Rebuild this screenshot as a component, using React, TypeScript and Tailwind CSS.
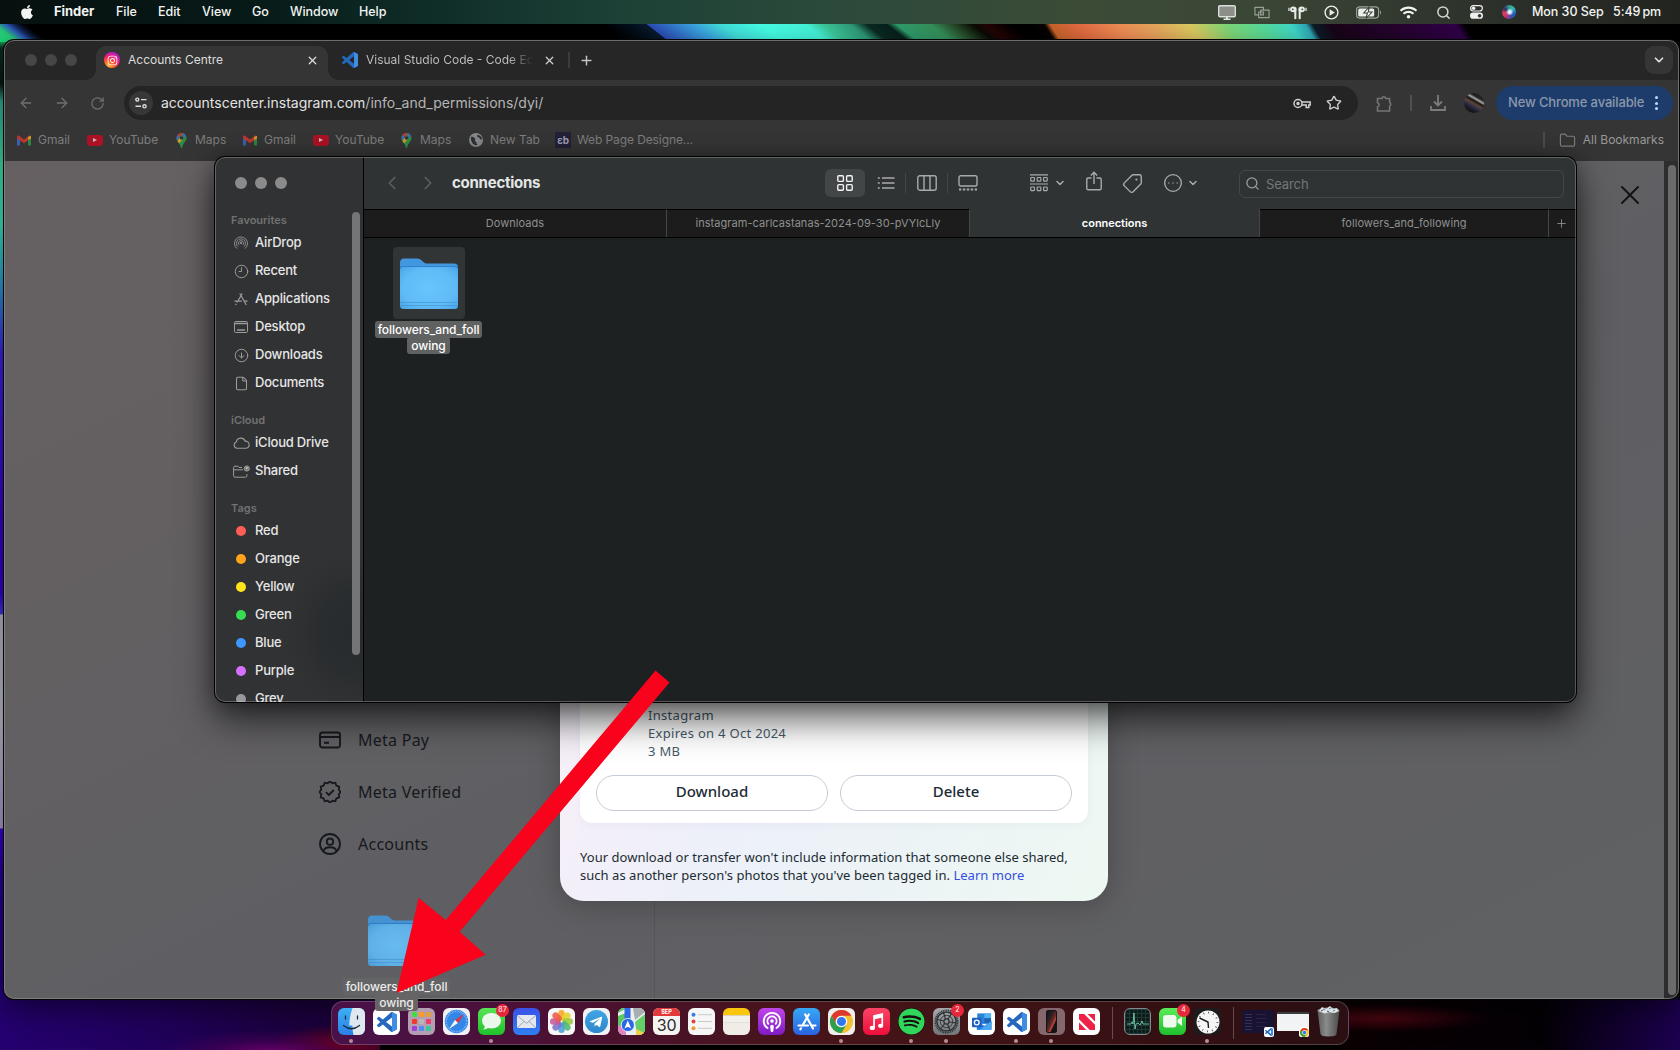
import React from "react";
import {
  ArrowLeft, ArrowRight, ChevronDown, ChevronLeft, ChevronRight, Plus, RotateCw, Star, X,
  Search, Share, Tag, CircleEllipsis, Folder as FolderIcon, Clock9, CircleArrowDown, File, Podcast,
} from "lucide-react";
import { FaApple, FaInstagram, FaSpotify, FaTelegramPlane, FaWifi } from "react-icons/fa";

const VSCODE =
  "M23.15 2.587L18.21.21a1.494 1.494 0 0 0-1.705.29l-9.46 8.63-4.12-3.128a.999.999 0 0 0-1.276.057L.327 7.261A1 1 0 0 0 .326 8.74L3.899 12 .326 15.26a1 1 0 0 0 .001 1.479L1.65 17.94a.999.999 0 0 0 1.276.057l4.12-3.128 9.46 8.63a1.492 1.492 0 0 0 1.704.29l4.942-2.377A1.5 1.5 0 0 0 24 20.06V3.939a1.5 1.5 0 0 0-.85-1.352zm-5.146 14.861L10.826 12l7.178-5.448v10.896z";

function VsCode({ className }: { className: string }) {
  return (
    <svg viewBox="0 0 24 24" className={className}>
      <path d={VSCODE} fill="#2668bd" />
      <path d="M18 .1 23.2 2.6 24 4v16l-.8 1.4L18 24z" fill="#3f8ee4" />
    </svg>
  );
}

/* ---------- Wallpaper ---------- */

function Wallpaper() {
  return (
    <div className="absolute inset-0 overflow-hidden bg-black">
      <div className="absolute left-0 top-[24px] h-[1026px] w-[6px] bg-[linear-gradient(to_bottom,#2a50c8_0px,#26e06a_14px,#0a2a20_24px,#041a18_60px,#2fae90_78px,#3fd8a8_140px,#3ce0b8_200px,#2a9ad0_260px,#3a20e0_330px,#3400c8_500px,#3200d0_570px,#4038e0_590px,#b4b5c6_591px,#bcbaca_700px,#a898cc_804px,#3700d8_805px,#24009a_850px,#1e0070_1026px)]" />
      <svg className="absolute left-0 top-[24px] h-[18px] w-[60px]" viewBox="0 0 60 18">
        <defs>
          <linearGradient id="cornerGlow" x1="0" y1="18" x2="18" y2="-6" gradientUnits="userSpaceOnUse">
            <stop offset="0" stopColor="#1ad878" />
            <stop offset=".35" stopColor="#28c878" />
            <stop offset=".6" stopColor="#2a56b8" />
            <stop offset="1" stopColor="#0a1230" stopOpacity="0" />
          </linearGradient>
        </defs>
        <path d="M0 0H40L60 18H0Z" fill="url(#cornerGlow)" />
      </svg>
      <div className="absolute left-[600px] top-[24px] h-[17px] w-[430px] origin-top skew-x-[52deg] bg-[linear-gradient(to_right,#000_0px,#03101c_30px,#0a1a30_46px,#2b4bb4_47px,#3aa0e0_90px,#41e0dc_120px,#45ffe6_160px,#45f5da_205px,#3cc89a_222px,#2f9a78_250px,#0a2a22_266px,#07201c_286px,#2f9c6c_296px,#35905a_330px,#28502c_350px,#0a0a04_372px,#240404_385px,#000_410px)]" />
      <div className="absolute left-[1030px] top-[24px] h-[17px] w-[500px] origin-top skew-x-[32deg] bg-[linear-gradient(to_right,#000_0px,#0a0402_14px,#c8642a_20px,#e06a40_45px,#f08a54_85px,#e8a45c_120px,#dccb60_160px,#80d878_195px,#58dc98_230px,#40d8c8_260px,#2fa8b8_275px,#0c1c28_282px,#180418_300px,#24042c_360px,#300048_425px,#000_434px,#000_500px)]" />
      <div className="absolute bottom-0 left-0 h-[52px] w-[480px] bg-[radial-gradient(ellipse_110px_22px_at_270px_54px,#6a0068_0%,#50005880_50%,transparent_100%),radial-gradient(ellipse_70px_20px_at_345px_46px,#700010_0%,transparent_100%),linear-gradient(to_right,#240070_0%,#20005a_35%,#1c0040_60%,#160030_100%)]" />
      <div className="absolute bottom-0 left-[380px] h-[52px] w-[960px] bg-black" />
      <div className="absolute bottom-0 left-[1340px] h-[52px] w-[340px] bg-[radial-gradient(ellipse_110px_14px_at_40px_20px,#4a0610_0%,transparent_100%),linear-gradient(to_right,#0a0002_0%,#040006_60%,#1c0050_100%)]" />
      <div className="absolute right-0 top-[40px] h-[960px] w-[2px] bg-[#050505]" />
    </div>
  );
}

/* ---------- Menu bar ---------- */

function MenuBar() {
  return (
    <div className="absolute inset-x-0 top-0 flex h-6 items-center whitespace-nowrap bg-[linear-gradient(to_right,#06100f_0px,#071a18_250px,#0f2d28_430px,#1d4136_620px,#2b4a3b_830px,#3b4b36_1080px,#3b4736_1250px,#2c302a_1500px,#22241f_1680px)] text-[12.5px] font-medium tracking-[-0.05px] text-[#f2f4f3]">
      <FaApple className="ml-[19px] h-[16px] w-[16px]" />
      <span className="ml-[19px] w-[62px] text-[13px] font-bold">Finder</span>
      <span className="w-[42px]">File</span>
      <span className="w-[44px]">Edit</span>
      <span className="w-[50px]">View</span>
      <span className="w-[38px]">Go</span>
      <span className="w-[69px]">Window</span>
      <span>Help</span>
      <div className="ml-auto flex items-center">
        <svg viewBox="0 0 18 15" className="mr-[18px] h-[15px] w-[18px]">
          <rect x=".7" y=".7" width="16.6" height="11" rx="1.2" fill="#8b8f88" stroke="#dcdedb" strokeWidth="1.4" />
          <path d="M5.5 14.3h7M9 12v2" stroke="#e6e8e5" strokeWidth="1.8" />
        </svg>
        <svg viewBox="0 0 17 13" className="mr-[18px] h-[13px] w-[16px] opacity-60" fill="none" stroke="#d8dad6" strokeWidth="1.2">
          <path d="M10 4V1H1v8h4M7 4h9v8H5V9M5 9V6h5v3H7V4" />
        </svg>
        <svg viewBox="0 0 20 15" className="mr-[17px] h-[15px] w-[19px]" fill="#e8eae7">
          <ellipse cx="5.6" cy="4.2" rx="3.4" ry="3" /><ellipse cx="14.4" cy="4.2" rx="3.4" ry="3" />
          <rect x="6.6" y="4" width="2.2" height="10.5" rx="1" /><rect x="11.2" y="4" width="2.2" height="10.5" rx="1" />
          <path d="M1 2.600v3.400M19 2.600v3.400" stroke="#e8eae7" strokeWidth="1.300" />
          <circle cx="5" cy="4.2" r=".9" fill="#3a4636" /><circle cx="15" cy="4.2" r=".9" fill="#3a4636" />
        </svg>
        <svg viewBox="0 0 15 15" className="mr-[17px] h-[15px] w-[15px]">
          <circle cx="7.5" cy="7.5" r="6.4" fill="none" stroke="#eceeeb" strokeWidth="1.4" />
          <path d="M5.6 4.3v6.4l5.200-3.200z" fill="#eceeeb" />
        </svg>
        <svg viewBox="0 0 26 13" className="mr-[18px] h-[13px] w-[26px]">
          <rect x=".6" y=".9" width="22" height="11.2" rx="3" fill="none" stroke="#9da19a" strokeWidth="1.1" />
          <rect x="2.2" y="2.5" width="16" height="8" rx="1.6" fill="#eceeeb" />
          <path d="M13.5.5 7.8 7h3.6L10 12.5 16 6h-3.8z" fill="#fff" stroke="#3a4434" strokeWidth="1.1" />
          <path d="M24 4.6c1.4.6 1.4 3.2 0 3.8z" fill="#9da19a" />
        </svg>
        <FaWifi className="mr-[19px] h-[17px] w-[17px]" />
        <Search className="mr-[19px] h-[15px] w-[15px] text-[#d2d4d0]" strokeWidth={2.4} />
        <svg viewBox="0 0 13 14" className="mr-[19px] h-[14px] w-[13px]">
          <rect x=".6" y=".6" width="11.8" height="5.4" rx="2.7" fill="none" stroke="#eee" strokeWidth="1.2" />
          <circle cx="3.6" cy="3.3" r="1.8" fill="#eee" />
          <rect x="0" y="7.6" width="13" height="6.2" rx="3.1" fill="#eee" />
          <circle cx="9.6" cy="10.7" r="1.8" fill="#30352d" />
        </svg>
        <div className="mr-[16px] h-[14px] w-[14px] rounded-full bg-[radial-gradient(circle_at_55%_50%,#fff_0%,#d8e8ff_14%,transparent_36%),conic-gradient(from_0deg,#3a9a8a,#2ac0b0,#2a60c0,#3050b0,#c03070,#e04060,#303060,#3a9a8a)]" />
        <span className="w-[81px]">Mon 30 Sep</span>
        <span className="w-[67px]">5:49<span className="ml-[2px]">pm</span></span>
      </div>
    </div>
  );
}

/* ---------- Browser ---------- */

const Gmail = () => (
  <svg viewBox="0 0 14 11" className="h-[11px] w-[14px]">
    <path d="M0 1.5V10.4h3V4.5z" fill="#3c5fb0" /><path d="M14 1.5v8.9h-3V4.5z" fill="#2b8540" />
    <path d="M0 1.2 1.4.2 7 4.6 12.6.2 14 1.2v2L7 8.3 0 3.2z" fill="#b8372e" /><path d="M11 2 14 .8v3L11 5z" fill="#c99a22" />
  </svg>
);
const Youtube = () => <span className="relative h-[11px] w-[16px] rounded-[3px] bg-[#ab1225]"><span className="absolute left-[6px] top-[3px] border-y-[2.5px] border-l-[4px] border-y-transparent border-l-[#c9b9bb]" /></span>;
const Maps = () => (
  <svg viewBox="0 0 10 15" className="h-[15px] w-[11px]">
    <path d="M5 0a5 5 0 0 0-5 5c0 3.5 3.6 5 4.3 9.4q.7 1.2 1.4 0C6.400 10 10 8.500 10 5a5 5 0 0 0-5-5z" fill="#2f8a48" />
    <path d="M.9 2.200A5 5 0 0 1 6.500.2L2.800 5z" fill="#b83a34" /><path d="M6.400.2A5 5 0 0 1 9.300 2.500L5.500 6.800z" fill="#3c68b8" />
    <path d="M.8 7.800 4 3.800l2.500 2.200L2.600 10.500z" fill="#c69c28" /><path d="M0 5a5 5 0 0 1 1-2.900L3 3.800.8 7.800A5 5 0 0 1 0 5z" fill="#3c68b8" />
    <circle cx="5" cy="5" r="1.800" fill="#343434" />
  </svg>
);

function Bookmark({ icon, label, className }: { icon: React.ReactNode; label: string; className: string }) {
  return <div className={"flex items-center text-[12px] " + className}>{icon}<span>{label}</span></div>;
}

function Browser() {
  return (
    <div className="absolute left-[4px] top-[40px] flex h-[959px] w-[1675px] flex-col overflow-hidden rounded-[10px] bg-[#353535] shadow-[0_0_0_1px_#050505,0_10px_30px_rgba(0,0,0,.5)]">
      <div className="flex h-10 shrink-0 items-center bg-[#262626]">
        <div className="ml-[21px] flex gap-2">
          <i className="h-3 w-3 rounded-full bg-[#464646]" /><i className="h-3 w-3 rounded-full bg-[#464646]" /><i className="h-3 w-3 rounded-full bg-[#464646]" />
        </div>
        <div className="relative ml-[19px] mt-[6px] flex h-[34px] w-[232px] items-center self-start rounded-t-[10px] bg-[#353535] pb-[6px] text-[12px] text-[#dcdcdc]">
          <i className="absolute -left-[10px] bottom-0 h-[10px] w-[10px] bg-[radial-gradient(circle_at_0_0,#262626_9.5px,#353535_10px)]" />
          <i className="absolute -right-[10px] bottom-0 h-[10px] w-[10px] bg-[radial-gradient(circle_at_100%_0,#262626_9.5px,#353535_10px)]" />
          <span className="ml-2 flex h-4 w-4 items-center justify-center rounded-full bg-[radial-gradient(circle_at_25%_95%,#ffc840_0%,#ff6a20_28%,#f0206a_55%,#b018d8_85%)] text-white"><FaInstagram className="h-[11px] w-[11px]" /></span>
          <span className="ml-2">Accounts Centre</span>
          <X className="ml-auto mr-[9px] h-[13px] w-[13px]" strokeWidth={2.4} />
        </div>
        <VsCode className="ml-[14px] h-4 w-4" />
        <span className="ml-2 w-[167px] overflow-hidden whitespace-nowrap bg-[linear-gradient(to_right,#c2c2c2_85%,#26262600_100%)] bg-clip-text text-[12px] text-transparent">Visual Studio Code - Code Editing</span>
        <X className="ml-[10px] h-[13px] w-[13px] text-[#d0d0d0]" strokeWidth={2.3} />
        <i className="ml-[12px] h-4 w-[2px] bg-[#3c3c3c]" />
        <Plus className="ml-[9px] h-[15px] w-[15px] text-[#c4c4c4]" strokeWidth={2.3} />
        <div className="ml-auto mr-[6px] flex h-7 w-7 items-center justify-center rounded-[9px] bg-[#353535] text-[#e0e0e0]"><ChevronDown className="h-[14px] w-[14px]" strokeWidth={3} /></div>
      </div>

      <div className="flex h-[46px] shrink-0 items-center text-[#6f6f6f]">
        <ArrowLeft className="ml-[14px] h-4 w-4" /><ArrowRight className="ml-5 h-4 w-4" /><RotateCw className="ml-5 h-[15px] w-[15px]" />
        <div className="ml-[19px] flex h-[34px] w-[1234px] items-center rounded-full bg-[#242424]">
          <span className="ml-[5px] flex h-6 w-6 items-center justify-center rounded-full bg-[#373737]">
            <svg viewBox="0 0 12 12" className="h-3 w-3" fill="none" stroke="#dcdcdc" strokeWidth="1.4"><circle cx="2.300" cy="2.600" r="1.500" /><path d="M6 2.600h5.500M.5 9.300H6" /><circle cx="9.500" cy="9.300" r="1.600" /></svg>
          </span>
          <span className="mb-[2px] ml-2 text-[14px] text-[#b5b5b5]"><span className="text-[#e2e2e2]">accountscenter.instagram.com</span>/info_and_permissions/dyi/</span>
          <svg viewBox="0 0 18 11" className="ml-auto mr-[15px] h-[11px] w-[18px]" fill="none" stroke="#cfcfcf" strokeWidth="1.500"><circle cx="5" cy="5.500" r="4" /><circle cx="5" cy="5.500" r="1" fill="#cfcfcf" /><path d="M9 4h8.200v3h-1.400v2.500h-2.600V7H9" /></svg>
          <Star className="mr-4 h-4 w-4 text-[#d0d0d0]" strokeWidth={2} />
        </div>
        <svg viewBox="0 0 16 17" className="ml-[18px] h-[17px] w-4" fill="none" stroke="#747474" strokeWidth="1.600"><path d="M1.500 3.500h4.500a1.800 1.800 0 0 1 3.600 0h4v4a2 2 0 0 1 0 3.600V16H1.500v-4.200a2.100 2.100 0 0 0 0-4.100z" /></svg>
        <i className="ml-[18px] h-4 w-[2px] bg-[#505050]" />
        <svg viewBox="0 0 16 16" className="ml-[18px] h-4 w-4" fill="none" stroke="#7c7c7c" strokeWidth="1.800"><path d="M8 0v10M4 6.500l4 4 4-4M1 11v4h14v-4" /></svg>
        <span className="ml-[18px] h-5 w-5 rounded-full bg-[linear-gradient(30deg,#151515_20%,#2a2a48_35%,#5a4638_48%,#141414_58%,#a8a8a8_66%,#222_74%)]" />
        <div className="ml-[12px] flex h-[34px] w-[177px] items-center whitespace-nowrap rounded-full bg-[#1d3c6c] pl-3 text-[13px] font-medium text-[#8b98ab]">
          <span className="w-[143px] tracking-[-0.14px]">New Chrome available</span>
          <span className="ml-1 flex flex-col gap-[2.500px]"><i className="h-[3px] w-[3px] rounded-full bg-[#bcd6ff]" /><i className="h-[3px] w-[3px] rounded-full bg-[#bcd6ff]" /><i className="h-[3px] w-[3px] rounded-full bg-[#bcd6ff]" /></span>
        </div>
      </div>

      <div className="flex h-[35px] shrink-0 items-center whitespace-nowrap pb-[7px] text-[#7d7d7d]">
        <Bookmark icon={<Gmail />} label="Gmail" className="ml-[13px] w-[70px] gap-[7px]" />
        <Bookmark icon={<Youtube />} label="YouTube" className="w-[89px] gap-[6px]" />
        <Bookmark icon={<Maps />} label="Maps" className="w-[67px] gap-[8px]" />
        <Bookmark icon={<Gmail />} label="Gmail" className="w-[70px] gap-[7px]" />
        <Bookmark icon={<Youtube />} label="YouTube" className="w-[88px] gap-[6px]" />
        <Bookmark icon={<Maps />} label="Maps" className="w-[68px] gap-[8px]" />
        <Bookmark icon={<svg viewBox="0 0 14 14" className="h-[14px] w-[14px]"><circle cx="7" cy="7" r="7" fill="#85888c" /><path d="M2 4c2-.5 3 .5 4 1.500S5 8 6.500 8.500 7 11 8.500 12c-4 1-7-3-6.500-8zM8 2c-.5 2 1 2 2 2.500s.5 2.500 3 2c0-3-2-4.500-5-4.500z" fill="#303030" /></svg>} label="New Tab" className="w-[86px] gap-[7px]" />
        <Bookmark icon={<span className="flex h-4 w-4 items-center justify-center bg-[#232037] text-[10px] font-bold text-[#9c9bb0]">ɛb</span>} label="Web Page Designe..." className="gap-[6px] tracking-[-0.1px]" />
        <i className="ml-auto h-4 w-[2px] bg-[#4c4c4c]" />
        <FolderIcon className="ml-[14px] h-[17px] w-[17px]" strokeWidth={1.700} />
        <span className="ml-[7px] mr-[15px] text-[12px] text-[#989898]">All Bookmarks</span>
      </div>
      <Page />
      <div className="pointer-events-none absolute inset-0 rounded-[10px] border border-[#8a8d8a]/70" />
    </div>
  );
}

function NavItem({ icon, label }: { icon: React.ReactNode; label: string }) {
  return <div className="flex h-[52px] items-center gap-[17px] text-[16px] tracking-[0.25px] text-[#16191d]">{icon}<span className="mb-px">{label}</span></div>;
}

function Page() {
  const seal = Array.from({ length: 24 }, (_, i) => {
    const a = (i * Math.PI) / 12;
    const r = i % 2 ? 9 : 10.700;
    return `${11 + r * Math.cos(a)},${11 + r * Math.sin(a)}`;
  }).join(" ");
  return (
    <div className="flex flex-1 bg-[linear-gradient(to_bottom_right,#666062_0%,#646062_25%,#5f5f63_55%,#606163_100%)] font-['Noto_Sans',sans-serif]">
      <div className="flex w-[651px] shrink-0 flex-col border-r border-[#56565a] pl-[315px] pt-[553px]">
        <NavItem label="Meta Pay" icon={<svg viewBox="0 0 22 22" className="h-[22px] w-[22px]" fill="none" stroke="#16191d" strokeWidth="1.900"><rect x="1" y="3.500" width="20" height="15" rx="2.500" /><path d="M1 8h20M5 13.800h5" /></svg>} />
        <NavItem label="Meta Verified" icon={<svg viewBox="0 0 22 22" className="h-[22px] w-[22px]" fill="none" stroke="#16191d" strokeWidth="1.800" strokeLinejoin="round"><polygon points={seal} /><path d="m7 11.200 2.800 2.800 5-5" /></svg>} />
        <NavItem label="Accounts" icon={<svg viewBox="0 0 22 22" className="h-[22px] w-[22px]" fill="none" stroke="#16191d" strokeWidth="1.800"><circle cx="11" cy="11" r="10" /><circle cx="11" cy="8.700" r="3.200" /><path d="M4.500 18c1.500-5 11.500-5 13 0" /></svg>} />
      </div>
      <div className="flex flex-1 justify-end pr-[18px] pt-[18px]"><X className="h-8 w-8 text-[#101214]" strokeWidth={1.500} /></div>
      <div className="flex w-[15px] justify-center bg-[#2d2d2d] pt-1"><i className="h-[830px] w-2 rounded-full bg-[#6b6b6b]" /></div>
      <div className="absolute left-[556px] top-[300px] flex h-[561px] w-[548px] flex-col rounded-[24px] bg-[linear-gradient(115deg,#f6eff6_0%,#f4eff8_30%,#edf0f9_48%,#ecf3f6_70%,#eef8f2_100%)] px-5 pb-[15px] text-[13px] text-[#1c2b33] shadow-[0_4px_30px_rgba(0,0,0,.25)]">
        <div className="flex h-[483px] flex-col justify-end rounded-b-[12px] bg-white px-4 pb-3 shadow-[0_2px_8px_rgba(80,80,140,.05)]">
          <div className="mb-[15px] pl-[52px] leading-[18px] tracking-[0.3px] text-[#465a69]"><p>Instagram</p><p>Expires on 4 Oct 2024</p><p>3 MB</p></div>
          <div className="flex gap-3 text-[15px] font-medium">
            <div className="flex h-9 flex-1 items-center justify-center rounded-full border border-[#c6ccd6] pb-1">Download</div>
            <div className="flex h-9 flex-1 items-center justify-center rounded-full border border-[#c6ccd6] pb-1">Delete</div>
          </div>
        </div>
        <p className="mt-[25px] whitespace-nowrap leading-[18px] tracking-[0.03px]">Your download or transfer won't include information that someone else shared,<br />such as another person's photos that you've been tagged in. <span className="text-[#3450e0]">Learn more</span></p>
      </div>
    </div>
  );
}

/* ---------- Finder ---------- */

function FolderArt({ id }: { id: string }) {
  return (
    <svg viewBox="0 0 58 52" className="h-[52px] w-[58px]">
      <defs>
        <radialGradient id={id} cx=".5" cy=".5" r=".75"><stop offset="0" stopColor="#69c5fd" /><stop offset=".6" stopColor="#60bbf6" /><stop offset="1" stopColor="#46a0e2" /></radialGradient>
      </defs>
      <path d="M0 5q0-4.500 4-4.500h13q3 0 5 2.300 2 2.700 5 2.700h27q4 0 4 4v8H0z" fill="#4298de" />
      <path d="M0 10q0-2 2-2h54q2 0 2 2v5H0z" fill="#2f7fd2" />
      <rect y="9" width="58" height="42" rx="3.500" fill={"url(#" + id + ")"} />
      <path d="M0 44.500h58M0 47.500h58" stroke="#3888c8" strokeWidth=".7" opacity=".7" />
    </svg>
  );
}

const icon = "h-[15px] w-[15px] text-[#9a9b9c]";
const AirDrop = () => (
  <svg viewBox="0 0 14 14" className="h-[14px] w-[14px]" fill="none" stroke="#9a9b9c" strokeWidth=".85">
    <path d="M3.100 12.600a6.500 6.500 0 1 1 7.800 0M4 10.700a4.500 4.500 0 1 1 6 0M5.200 8.900a2.500 2.500 0 1 1 3.600 0" /><circle cx="7" cy="7" r=".7" fill="#9a9b9c" />
  </svg>
);
const Apps = () => <svg viewBox="0 0 14 14" className="h-[14px] w-[14px]" fill="none" stroke="#9a9b9c" strokeWidth="1.200"><path d="M8.200 1.500 3 10.500M1.500 13l.8-1.300M5.800 1.500l6.500 11.500M.5 9.200h7.300M10.300 9.200h3.200" /></svg>;
const Desk = () => <svg viewBox="0 0 14 12" className="h-[12px] w-[14px]" fill="none" stroke="#9a9b9c"><rect x=".5" y=".5" width="13" height="11" rx="1.200" /><path d="M1 2.500h12M3 9h8" strokeWidth="1.400" /></svg>;
const CloudGlyph = () => <svg viewBox="0 0 17 12" className="h-[12px] w-[17px]" fill="none" stroke="#9a9b9c" strokeWidth="1.100"><path d="M4 11.200a3.200 3.200 0 0 1-.7-6.200 4.600 4.600 0 0 1 8.900-.8 3.500 3.500 0 0 1 .8 7z" /></svg>;
const Shared = () => <svg viewBox="0 0 17 13" className="h-[13px] w-[17px]" fill="none" stroke="#9a9b9c"><path d="M9 2.500H6L5 1.200H2Q.6 1.200.6 2.600v8.200q0 1.400 1.400 1.400h10.500q1.400 0 1.400-1.400V9M.6 4.800H10" /><circle cx="13.800" cy="3.500" r="2.600" fill="#77797a" /><circle cx="13.800" cy="3" r=".9" fill="#ccc" stroke="none" /></svg>;

function Row({ glyph, label }: { glyph: React.ReactNode; label: string }) {
  return (
    <div className="flex h-7 shrink-0 items-center text-[13px] font-medium tracking-[-0.2px] text-[#e6e6e7]">
      <span className="ml-4 mr-1 flex w-[20px] justify-center">{glyph}</span>{label}
    </div>
  );
}
const Heading = ({ children, className }: { children: string; className: string }) => <div className={"h-[17px] shrink-0 pl-4 text-[11px] font-semibold leading-[16px] text-[#707172] " + className}>{children}</div>;
const TagDot = ({ c }: { c: string }) => <i className="h-[10px] w-[10px] rounded-full" style={{ background: c }} />;

function Finder() {
  const tags: [string, string][] = [["Red", "#ff5e57"], ["Orange", "#ffa41c"], ["Yellow", "#ffe31c"], ["Green", "#37dd52"], ["Blue", "#3e97ff"], ["Purple", "#d76fff"], ["Grey", "#98989d"]];
  return (
    <div className="absolute left-[215px] top-[157px] flex h-[545px] w-[1361px] overflow-hidden rounded-[10px] bg-[#1e2121]">
      <aside className="relative flex w-[148px] shrink-0 flex-col overflow-hidden bg-[#313233] bg-[radial-gradient(ellipse_70px_80px_at_140px_475px,#262b2e_0%,#2a2d2f_50%,transparent_100%)]">
        <div className="ml-5 mt-5 flex shrink-0 gap-2"><i className="h-3 w-3 rounded-full bg-[#8b8b8c]" /><i className="h-3 w-3 rounded-full bg-[#8b8b8c]" /><i className="h-3 w-3 rounded-full bg-[#8b8b8c]" /></div>
        <Heading className="mt-[23px]">Favourites</Heading>
        <Row glyph={<AirDrop />} label="AirDrop" />
        <Row glyph={<Clock9 className={icon} strokeWidth={1.600} />} label="Recent" />
        <Row glyph={<Apps />} label="Applications" />
        <Row glyph={<Desk />} label="Desktop" />
        <Row glyph={<CircleArrowDown className={icon} strokeWidth={1.600} />} label="Downloads" />
        <Row glyph={<File className={icon} strokeWidth={1.700} />} label="Documents" />
        <Heading className="mt-[15px]">iCloud</Heading>
        <Row glyph={<CloudGlyph />} label="iCloud Drive" />
        <Row glyph={<Shared />} label="Shared" />
        <Heading className="mt-[15px]">Tags</Heading>
        {tags.map(([n, c]) => <Row key={n} glyph={<TagDot c={c} />} label={n} />)}
        <i className="absolute left-[137px] top-[55px] h-[443px] w-2 rounded-full bg-[#737576]" />
      </aside>
      <section className="flex flex-1 flex-col border-l border-black">
        <header className="flex h-[52px] items-center bg-[#2f3334] text-[#a9abab]">
          <ChevronLeft className="ml-[17px] h-[22px] w-[22px] text-[#5c5f60]" strokeWidth={1.800} />
          <ChevronRight className="ml-[14px] h-[22px] w-[22px] text-[#5c5f60]" strokeWidth={1.800} />
          <span className="ml-[13px] w-[373px] text-[15px] font-bold tracking-[-0.25px] text-[#e4e5e5]">connections</span>
          <span className="flex h-7 w-10 items-center justify-center rounded-[6px] bg-[#434647]"><svg viewBox="0 0 16 16" className="h-4 w-4" fill="none" stroke="#f4f4f4" strokeWidth="1.400"><rect x=".8" y=".8" width="5.600" height="5.600" rx="1" /><rect x="9.600" y=".8" width="5.600" height="5.600" rx="1" /><rect x=".8" y="9.600" width="5.600" height="5.600" rx="1" /><rect x="9.600" y="9.600" width="5.600" height="5.600" rx="1" /></svg></span>
          <svg viewBox="0 0 18 14" className="ml-[12px] h-[14px] w-[18px]" stroke="currentColor" strokeWidth="1.400"><path d="M5 2h12.500M5 7h12.500M5 12h12.500M.8 2h2M.8 7h2M.8 12h2" /></svg>
          <i className="ml-[10px] h-5 w-px bg-[#434747]" />
          <svg viewBox="0 0 20 16" className="ml-[11px] h-4 w-5" fill="none" stroke="currentColor" strokeWidth="1.400"><rect x=".8" y=".8" width="18.400" height="14.400" rx="2" /><path d="M7 1v14M13 1v14" /></svg>
          <i className="ml-[10px] h-5 w-px bg-[#434747]" />
          <svg viewBox="0 0 20 16" className="ml-[10px] h-4 w-5" fill="none" stroke="currentColor" strokeWidth="1.400"><rect x="1" y=".8" width="18" height="10.200" rx="1.800" /><path d="M1 14.500h18" strokeWidth="2" strokeDasharray="2.400 1.500" /></svg>
          <svg viewBox="0 0 18 18" className="ml-[52px] h-[18px] w-[18px]" fill="none" stroke="currentColor" strokeWidth="1.200"><path d="M0 .8h18M0 10h18" /><rect x=".8" y="3.500" width="3.600" height="3.600" rx=".6" /><rect x="7.200" y="3.500" width="3.600" height="3.600" rx=".6" /><rect x="13.600" y="3.500" width="3.600" height="3.600" rx=".6" /><rect x=".8" y="13" width="3.600" height="3.600" rx=".6" /><rect x="7.200" y="13" width="3.600" height="3.600" rx=".6" /><rect x="13.600" y="13" width="3.600" height="3.600" rx=".6" /></svg>
          <ChevronDown className="ml-[6px] h-3 w-3" strokeWidth={3} />
          <svg viewBox="0 0 16 20" className="mb-1 ml-[20px] h-[20px] w-4" fill="none" stroke="currentColor" strokeWidth="1.400"><path d="M5.500 7H2.200Q.8 7 .8 8.400v9Q.8 18.800 2.200 18.800h11.600q1.400 0 1.400-1.400v-9Q15.200 7 13.800 7h-3.300M8 13V1.500M4.800 4.500 8 1.300l3.200 3.200" /></svg>
          <Tag className="ml-[20px] h-[21px] w-[21px] rotate-90" strokeWidth={1.600} />
          <CircleEllipsis className="ml-[20px] h-[20px] w-[20px]" strokeWidth={1.600} />
          <ChevronDown className="ml-[4px] h-3 w-3" strokeWidth={3} />
          <div className="ml-auto mr-[12px] mt-px flex h-7 w-[325px] items-center rounded-[6px] border border-[#434748] pl-[5px] text-[13px] text-[#757879]"><Search className="mr-[6px] h-[15px] w-[15px] text-[#9da0a0]" /><span className="mt-[2px] tracking-[-0.1px]">Search</span></div>
        </header>
        <nav className="flex h-[29px] shrink-0 border-b border-black text-[11px] tracking-[0.06px] text-[#8f9090]">
          <div className="flex w-[303px] items-center justify-center border-r border-t border-r-[#444747] border-t-black bg-[#1b1c1b]">Downloads</div>
          <div className="flex w-[303px] items-center justify-center border-r border-t border-r-[#444747] border-t-black bg-[#1b1c1b]">instagram-carlcastanas-2024-09-30-pVYlcLly</div>
          <div className="flex w-[290px] items-center justify-center border-r border-r-[#444747] bg-[#2f3334] pt-px font-semibold tracking-[-0.04px] text-white">connections</div>
          <div className="flex w-[289px] items-center justify-center border-r border-t border-r-[#444747] border-t-black bg-[#1b1c1b]">followers_and_following</div>
          <div className="flex flex-1 items-center border-t border-black bg-[#1b1c1b] pl-[6px]"><Plus className="h-[13px] w-[13px]" strokeWidth={1.600} /></div>
        </nav>
        <div className="ml-[10px] mt-[9px] flex w-[109px] flex-col items-center whitespace-nowrap text-[12px] font-medium leading-[18px] tracking-[-0.05px] text-white">
          <span className="flex h-[72px] w-[72px] items-center justify-center rounded-[4px] bg-[#313536] pt-[2px]"><FolderArt id="folderMain" /></span>
          <span className="mt-[2px] h-[17px] rounded-[3px] bg-[#606161] px-[3px]">followers_and_foll</span>
          <span className="-mt-px h-[17px] rounded-[3px] bg-[#606161] px-1">owing</span>
        </div>
      </section>
      <div className="pointer-events-none absolute inset-0 rounded-[10px] border border-white/25" />
    </div>
  );
}

/* ---------- Dock ---------- */

function Tile({ children, className = "", dot, badge }: { children?: React.ReactNode; className?: string; dot?: boolean; badge?: string }) {
  return (
    <div className="relative h-[27px] w-[27px] shrink-0">
      <div className={"flex h-full w-full items-center justify-center overflow-hidden rounded-[6px] " + className}>{children}</div>
      {dot && <i className="absolute -bottom-[8px] left-[11px] h-1 w-1 rounded-full bg-[#b88d95]" />}
      {badge && <span className="absolute -right-[4px] -top-[4px] flex h-[13px] w-[13px] items-center justify-center rounded-full bg-[#e8273a] text-[7px] text-white">{badge}</span>}
    </div>
  );
}

const Chrome = ({ className }: { className: string }) => (
  <svg viewBox="0 0 24 24" className={className}>
    <circle cx="12" cy="12" r="12" fill="#f3c231" />
    <path d="M12 0a12 12 0 0 1 10.400 6H12a6 6 0 0 0-5.200 9L1.600 6A12 12 0 0 1 12 0z" fill="#dd3a2f" />
    <path d="M1.600 6l5.200 9A6 6 0 0 0 12 18h1.500L12 24A12 12 0 0 1 1.600 6z" fill="#2da04f" /><path d="M17.200 15 12 24 9 17z" fill="#2da04f" />
    <circle cx="12" cy="12" r="6" fill="#fff" /><circle cx="12" cy="12" r="4.700" fill="#3277f0" />
  </svg>
);

function Dock() {
  const petals = ["#f5a623", "#e8d22c", "#9ccb3c", "#52b86c", "#4a9fd8", "#7a74c8", "#c65a9c", "#ee5a44"];
  const pads = ["#3ee03e", "#ff9a1c", "#e8a030", "#f03a2a", "#b8b8b8", "#f03a6a", "#a040d8", "#4a90f0", "#38c8a0"];
  return (
    <div className="absolute left-[331px] top-[1001px] flex h-[44px] w-[1018px] items-start gap-2 rounded-[12px] border border-white/20 bg-[linear-gradient(to_right,#491149_0%,#4b1136_20%,#47141a_45%,#421416_60%,#351013_80%,#2a0f13_100%)] pl-[6px] pt-[6px]">
      <Tile dot className="bg-[linear-gradient(#3bb0f5,#2b7fe6)]"><svg viewBox="0 0 27 27" className="h-[27px] w-[27px]"><path d="M14.500 0H27v27H15.500q-1.200-5-1-9.500h-3.300Q11.500 8 14.500 0z" fill="#dfe7ef" /><path d="M5.500 17.500q8 6.500 16 0M7.500 8v3M19.500 8v3" fill="none" stroke="#1b2b3b" strokeWidth="1.300" strokeLinecap="round" /></svg></Tile>
      <Tile className="bg-white"><VsCode className="h-[20px] w-[20px]" /></Tile>
      <Tile className="bg-[#b59db2]"><div className="grid grid-cols-3 gap-x-[2px] gap-y-[2px]">{pads.map((c, i) => <i key={i} className="h-[5px] w-[5px] rounded-[1px]" style={{ background: c }} />)}</div></Tile>
      <Tile className="bg-[#f0f1f3]"><svg viewBox="0 0 27 27" className="h-[27px] w-[27px]"><circle cx="13.500" cy="13.500" r="11.700" fill="#3286e8" /><circle cx="13.500" cy="13.500" r="10.200" fill="none" stroke="#a9cdf6" strokeWidth="1.600" strokeDasharray=".6 1" /><path d="M21 6 15 15l-3-3z" fill="#e8303a" /><path d="m6 21 6-9 3 3z" fill="#f6f6f6" /></svg></Tile>
      <Tile dot badge="87" className="bg-[linear-gradient(#58e455,#1fc12c)]"><svg viewBox="0 0 27 27" className="h-[27px] w-[27px]"><ellipse cx="13.500" cy="12.700" rx="9.500" ry="7.800" fill="#edf8ec" /><path d="M7 17q0 3-2 4.500 4 0 6-2.500z" fill="#edf8ec" /></svg></Tile>
      <Tile className="bg-[linear-gradient(#3b51e8,#2f7ff2)]"><svg viewBox="0 0 19 13" className="h-[13px] w-[19px]"><rect width="19" height="13" rx="1.500" fill="#e4e8ee" /><path d="m.5.800 9 7.500 9-7.500M.5 12.500l6.500-6M18.500 12.500l-6.500-6" fill="none" stroke="#9098a4" strokeWidth=".8" /></svg></Tile>
      <Tile className="bg-[#f7f7f7]"><svg viewBox="0 0 27 27" className="h-[27px] w-[27px]">{petals.map((c, i) => <rect key={i} x="10.300" y="2" width="6.400" height="10.500" rx="3.200" fill={c} opacity=".88" transform={`rotate(${i * 45} 13.500 13.500)`} />)}</svg></Tile>
      <Tile className="bg-[#f1f2f4]"><span className="flex h-[23px] w-[23px] items-center justify-center rounded-full bg-[linear-gradient(#3fa6e4,#2e86cc)] text-white"><FaTelegramPlane className="mr-[2px] h-[14px] w-[14px]" /></span></Tile>
      <Tile className="bg-[#58c860]"><svg viewBox="0 0 27 27" className="h-[27px] w-[27px]"><path d="M0 0h27v27H0z" fill="#eceff0" /><path d="M0 5 9 0H0zM0 8l8-3v10L0 20z" fill="#58c860" /><path d="M15 0h12v4L17 12z" fill="#a8adb0" /><path d="M17 14 27 6v21h-8z" fill="#62cf68" /><path d="M0 27 0 17l8 4v6z" fill="#e082bd" /><path d="m18 21 9 4v2h-9z" fill="#f0cf4c" /><path d="M6.500 0h6v12h-6z" fill="#2c68e6" /><circle cx="9.800" cy="17" r="6.600" fill="#2c68e6" stroke="#fff" strokeWidth=".8" /><path d="m9.800 12.500 3.400 8-3.400-1.800-3.400 1.800z" fill="#fff" /></svg></Tile>
      <Tile className="flex-col bg-[#f6f4f3]"><span className="w-full bg-[#e23a3a] text-center text-[5.500px] font-bold leading-[8px] text-white">SEP</span><span className="flex-1 text-[16px] leading-[18px] tracking-[-0.300px] text-[#2c2a2a]">30</span></Tile>
      <Tile className="bg-[#f6f6f6]"><svg viewBox="0 0 27 27" className="h-[27px] w-[27px]"><circle cx="5.500" cy="6.700" r="2" fill="#3a7af0" /><circle cx="5.500" cy="13.500" r="2" fill="#e2453e" /><circle cx="5.500" cy="20.300" r="2" fill="#f09a2c" /><path d="M10 6.700h14M10 13.500h14M10 20.300h14" stroke="#c4c4c4" strokeWidth=".9" /></svg></Tile>
      <Tile className="bg-[linear-gradient(#fbc70e_0,#fbc70e_7px,#c9b88a_7px,#f2f0ea_8px,#f2f0ea_14px,#d5d3cc_14px,#efede6_15px)]" />
      <Tile className="bg-[linear-gradient(#c045ea,#7f1cc4)] text-white"><Podcast className="h-[22px] w-[22px]" /></Tile>
      <Tile className="bg-[linear-gradient(#36a8f4,#2a62e0)]"><svg viewBox="0 0 20 20" className="h-[20px] w-[20px]" fill="none" stroke="#fff" strokeWidth="2.200" strokeLinecap="round"><path d="M11.800 2.500 5.500 13.500M8.200 2.500l7.800 14M1.500 13.500h9.500M15 13.500h3.500M4 16.300l-.6 1" /></svg></Tile>
      <Tile dot className="bg-[#f0efee]"><Chrome className="h-[23px] w-[23px]" /></Tile>
      <Tile className="bg-[linear-gradient(#f84466,#ee0f3a)]"><svg viewBox="0 0 18 20" className="h-[19px] w-[17px]" fill="#fff"><path d="M5.500 3.300 16 1v13.500h-1.800V6L7.300 7.500V17H5.500z" /><ellipse cx="4.600" cy="16.800" rx="2.800" ry="2.300" /><ellipse cx="13.400" cy="14.600" rx="2.800" ry="2.300" /></svg></Tile>
      <Tile dot className="rounded-full bg-[#160c0e] text-[#2fd65a]"><FaSpotify className="h-[27px] w-[27px]" /></Tile>
      <Tile dot badge="2" className="bg-[linear-gradient(#a5a9ab,#737678)]"><svg viewBox="0 0 27 27" className="h-[27px] w-[27px]" fill="none" stroke="#2e3235"><circle cx="13.500" cy="13.500" r="11.200" strokeWidth="1.600" strokeDasharray="1.100 .7" /><circle cx="13.500" cy="13.500" r="9.600" strokeWidth="1.500" /><circle cx="13.500" cy="13.500" r="6.200" strokeWidth=".9" /><circle cx="13.500" cy="13.500" r="2.600" strokeWidth="1.300" /><path d="m14.800 11.200 4-6M16 14l7 .8M11.800 15.500 7.500 21M11 13 4 11.500M14.500 16l2.500 6.500M12.500 11 10.500 4.500" strokeWidth="1.200" /></svg></Tile>
      <Tile className="bg-white"><svg viewBox="0 0 21 19" className="h-[19px] w-[20px]"><rect x="5.500" y="1" width="14.500" height="11" fill="#2a82d8" /><path d="M13 1h7v5h-7z" fill="#50b4ee" /><path d="M13 6h7v5h-7z" fill="#1f62b8" /><path d="m5 9 8 5 7.500-5v8.500q0 1-1 1H6q-1 0-1-1z" fill="#2a7ee0" /><path d="M20.500 9v8.500q0 1-1 1H8z" fill="#4aa6ee" /><rect x="0" y="5.500" width="10" height="10" rx="1" fill="#1c5fc0" /><circle cx="5" cy="10.500" r="2.500" fill="none" stroke="#fff" strokeWidth="1.400" /></svg></Tile>
      <Tile dot className="bg-white"><VsCode className="h-[20px] w-[20px]" /></Tile>
      <Tile dot className="bg-[#84686e]"><span className="h-[23px] w-[11px] rounded-[2px] border border-[#171314] bg-[linear-gradient(115deg,#0e1a20_10%,#3c2224_40%,#7c2c28_58%,#c04a40_66%,#161214_74%)]" /></Tile>
      <Tile className="bg-white"><svg viewBox="0 0 16 16" className="h-4 w-4" fill="#ee2247"><path d="M0 0h5.200L16 10.800V16h-5.200L0 5.200zM8.500 0H16v7.500zM0 8.500V16h7.500z" /></svg></Tile>
      <i className="ml-1 mr-[3px] mt-[-1px] h-8 w-px shrink-0 bg-white/25" />
      <Tile className="border-[1.500px] border-[#83898c] bg-[#0c1a1a] bg-[linear-gradient(#1d3a36_1px,transparent_1px),linear-gradient(to_right,#1d3a36_1px,transparent_1px)] bg-[size:4px_4px]"><svg viewBox="0 0 24 24" className="h-6 w-6" fill="none" stroke="#7fe0b8" strokeWidth=".8"><path d="M1 14h4l1-2 1 2 1-11 1 16 1-5 2-1 2 2 2-4 1 3h6" /></svg></Tile>
      <Tile badge="4" className="bg-[linear-gradient(#5bec58,#1fbe2e)]"><svg viewBox="0 0 20 13" className="h-[13px] w-[20px]" fill="#f0fbef"><rect width="13.500" height="12.500" rx="3" /><path d="m14.500 5 4.500-3.500v9.500l-4.500-3.500z" /></svg></Tile>
      <Tile dot className="bg-[#1d1b1c]"><svg viewBox="0 0 24 24" className="h-[24px] w-[24px]"><circle cx="12" cy="12" r="11.500" fill="#f5f5f5" /><circle cx="12" cy="12" r="9.400" fill="none" stroke="#333" strokeWidth="1.800" strokeDasharray=".8 4.120" /><path d="M12.500 18 12 12 3.500 8" fill="none" stroke="#1a1a1a" strokeWidth="1.400" /></svg></Tile>
      <i className="ml-1 mt-[-1px] h-8 w-px shrink-0 bg-white/25" />
      <div className="relative mt-[2px] h-[23px] w-[32px] shrink-0 bg-[#191332]"><span className="absolute left-[3px] top-[4px] h-4 w-[7px] bg-[repeating-linear-gradient(#3a2f5c_0_1px,transparent_1px_3px)]" /><span className="absolute left-[14px] top-[4px] h-4 w-[10px] bg-[repeating-linear-gradient(#2c2048_0_1px,transparent_1px_4px)]" /><span className="absolute -bottom-[4px] right-0 flex h-[10px] w-[10px] items-center justify-center rounded-[2px] bg-white"><VsCode className="h-[8px] w-[8px]" /></span></div>
      <div className="relative -ml-[5px] mt-[4px] h-[19px] w-[32px] shrink-0 border-t-2 border-[#3c3c3e] bg-[#f2f3f4]"><span className="absolute -bottom-[6px] right-0 flex h-[10px] w-[10px] items-center justify-center rounded-[2px] bg-white"><Chrome className="h-[9px] w-[9px]" /></span></div>
      <svg viewBox="0 0 25 31" className="-ml-px -mt-[2px] h-[31px] w-[25px] shrink-0">
        <defs><linearGradient id="bin" x1="0" x2="1"><stop offset="0" stopColor="#5a5d5c" /><stop offset=".4" stopColor="#8a8c8b" /><stop offset="1" stopColor="#4a4c4c" /></linearGradient></defs>
        <path d="M1.500 4 4.500 28q.3 2.500 8 2.500t8-2.500L23.500 4z" fill="url(#bin)" />
        <ellipse cx="12.500" cy="4.500" rx="11" ry="3" fill="#8d8f8e" /><path d="m3 5 3-4 4 2 4-3 3 3 4-1 1.500 3-4 2-5-1-5 1.500z" fill="#dfe4e4" /><path d="m7 3 2 1M13 3l2-1M17 5l2-1" stroke="#4a80b0" /><path d="m5 5 2-1M11 5l2 .5" stroke="#555" />
      </svg>
    </div>
  );
}

/* ---------- Dragged folder and pointer arrow ---------- */

function DraggedFolder() {
  return (
    <div className="absolute left-[342px] top-[915px] flex w-[109px] flex-col items-center whitespace-nowrap text-[12px] font-medium leading-[18px] tracking-[-0.05px] text-[#ececec]">
      <div className="opacity-90"><FolderArt id="folderDrag" /></div>
      <span className="mt-[11px] h-[17px] rounded-[3px] bg-[#636465] px-[3px]">followers_and_foll</span>
      <span className="-mt-px h-[17px] rounded-[3px] bg-[#666465] px-1">owing</span>
    </div>
  );
}

export default function App() {
  return (
    <div className="relative h-[1050px] w-[1680px] overflow-hidden font-['Inter',sans-serif]">
      <Wallpaper />
      <Browser />
      <div className="absolute left-[4px] top-[80px] h-[919px] w-[1675px] overflow-hidden rounded-b-[10px]">
        <div className="absolute left-[211px] top-[77px] h-[545px] w-[1361px] rounded-[10px] shadow-[0_0_0_1px_#000,0_18px_36px_rgba(0,0,0,.62),0_0_20px_rgba(0,0,0,.3)]" />
      </div>
      <Finder />
      <MenuBar />
      <Dock />
      <DraggedFolder />
      <svg className="pointer-events-none absolute left-[390px] top-[665px] h-[335px] w-[290px]" viewBox="390 665 290 335">
        <polygon points="396.500,993 418.700,897.700 445.700,920 655.500,670.500 669.500,682.500 459.700,931.700 485.700,954.700" fill="#f8021c" />
      </svg>
    </div>
  );
}
